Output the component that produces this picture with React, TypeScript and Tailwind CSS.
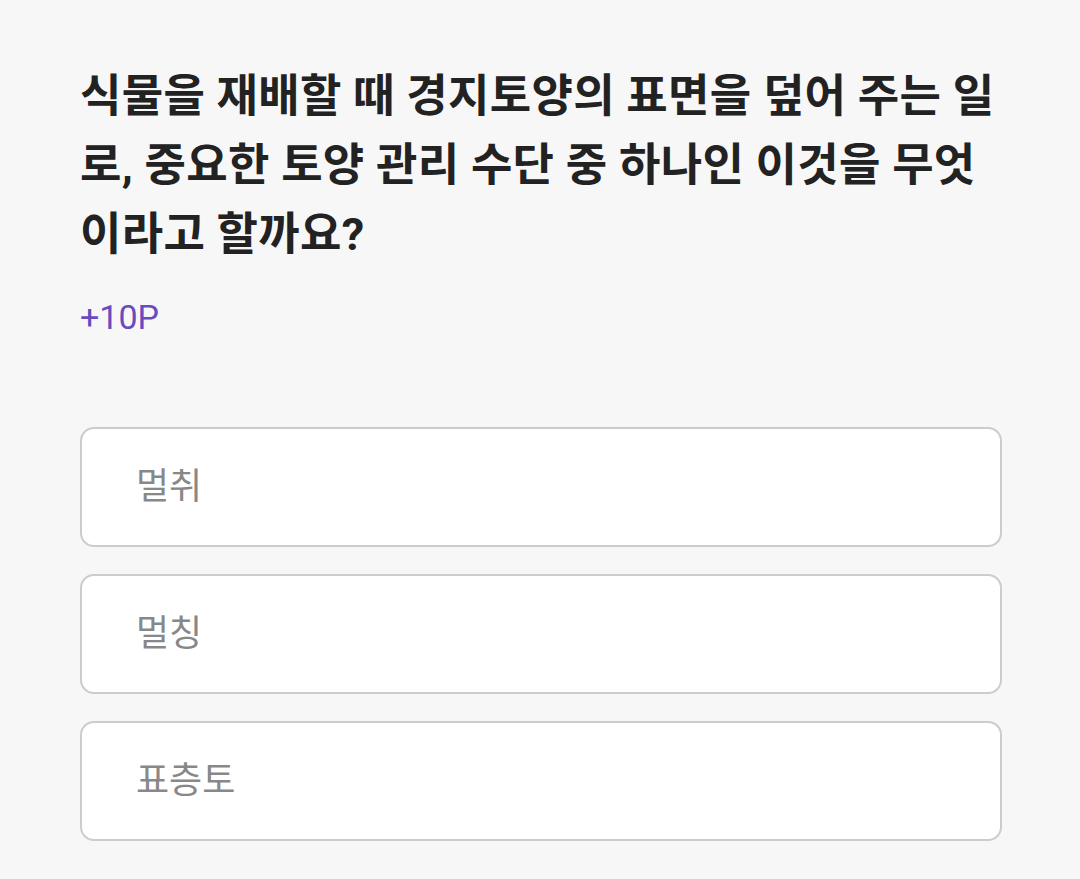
import React from 'react';

const options = ['멀취', '멀칭', '표층토'];

export default function App() {
  return (
    <div
      className="min-h-[879px] bg-[#f7f7f7] px-[80px] pt-[62px]"
      style={{ fontFamily: 'Roboto, "Noto Sans CJK KR", sans-serif' }}
    >
      <h1 className="w-[920px] text-[45px] font-bold leading-[69px] tracking-[0.3px] text-[#222222]">
        식물을 재배할 때 경지토양의 표면을 덮어 주는 일로, 중요한 토양 관리 수단 중 하나인 이것을 무엇이라고 할까요?
      </h1>
      <p className="mt-[28px] text-[34px] leading-[40px] text-[#6a4bbf]">+10P</p>
      <div className="mt-[90px] flex w-[922px] flex-col gap-[27px]">
        {options.map((opt) => (
          <div
            key={opt}
            className="flex h-[120px] items-center rounded-[14px] border-2 border-[#cccccc] bg-white pl-[54px] text-[36px] text-[#888888]"
          >
            {opt}
          </div>
        ))}
      </div>
    </div>
  );
}
